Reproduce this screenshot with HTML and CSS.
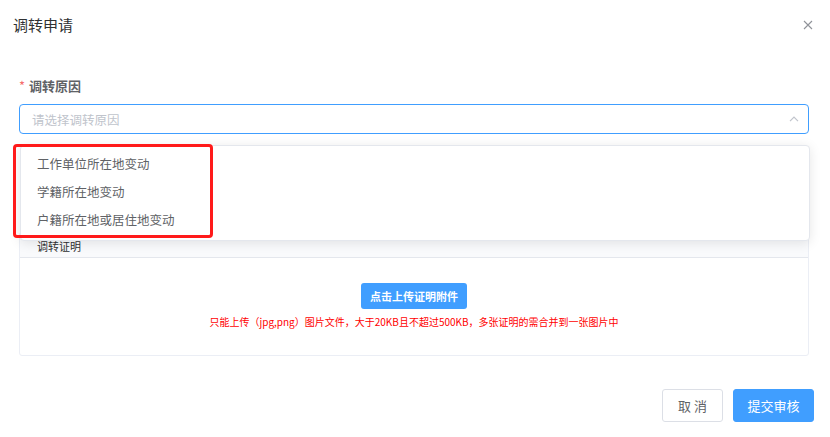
FILE: index.html
```html
<!DOCTYPE html>
<html lang="zh-CN">
<head>
  <meta charset="UTF-8">
  <meta name="viewport" content="width=device-width, initial-scale=1.0">
  <title>调转申请</title>
  <link rel="stylesheet" href="styles.css">
</head>
<body>
  <div class="dialog">
    <div class="dialog-header">
      <span class="dialog-title">调转申请</span>
      <span class="dialog-close">
        <svg width="10" height="10" viewBox="0 0 10 10"><path d="M1 1L9 9M9 1L1 9" stroke="#909399" stroke-width="1.1" fill="none"/></svg>
      </span>
    </div>

    <div class="dialog-body">
      <div class="form-label"><span class="required">*</span>调转原因</div>
      <div class="select">
        <span class="placeholder">请选择调转原因</span>
        <svg class="arrow" width="10" height="6" viewBox="0 0 10 6"><path d="M1 5.2L5 1.2L9 5.2" stroke="#c0c4cc" stroke-width="1.2" fill="none"/></svg>
      </div>

      <div class="proof-table">
        <div class="proof-head">调转证明</div>
        <div class="proof-body">
          <button class="upload-btn">点击上传证明附件</button>
          <p class="upload-tip">只能上传（jpg,png）图片文件，大于20KB且不超过500KB，多张证明的需合并到一张图片中</p>
        </div>
      </div>
    </div>

    <div class="dialog-footer">
      <button class="btn">取 消</button>
      <button class="btn btn-primary">提交审核</button>
    </div>

    <!-- select dropdown (open) -->
    <ul class="dropdown">
      <li>工作单位所在地变动</li>
      <li>学籍所在地变动</li>
      <li>户籍所在地或居住地变动</li>
    </ul>
    <div class="mark"></div>
  </div>
</body>
</html>
```

FILE: styles.css
```css
* {
  margin: 0;
  padding: 0;
  box-sizing: border-box;
}

body {
  background: #fff;
  font-family: "Noto Sans CJK SC", "Noto Sans", sans-serif;
  color: #606266;
}

.dialog {
  position: relative;
  width: 830px;
  height: 437px;
  overflow: hidden;
}

.dialog-header {
  display: flex;
  justify-content: space-between;
  align-items: center;
  padding: 15px 17px 0 13px;
  height: 35px;
}

.dialog-title {
  font-size: 15px;
  line-height: 20px;
  color: #303133;
}

.dialog-close {
  display: flex;
}

.dialog-body {
  padding: 41px 21px 0 19px;
}

.form-label {
  font-size: 13px;
  line-height: 20px;
  font-weight: 600;
  color: #606266;
}

.required {
  color: #f56c6c;
  margin-right: 4px;
  font-weight: 400;
}

.select {
  margin-top: 8px;
  height: 30px;
  border: 1px solid #409eff;
  border-radius: 4px;
  display: flex;
  align-items: center;
  justify-content: space-between;
  padding: 0 9px 0 12px;
}

.placeholder {
  font-size: 12.5px;
  color: #c0c4cc;
}

.proof-table {
  margin-top: 98px;
  border: 1px solid #ebeef5;
  border-radius: 3px;
  height: 124px;
}

.proof-head {
  height: 25px;
  line-height: 26px;
  background: #f9fafc;
  border-bottom: 1px solid #e4e7ed;
  font-size: 11px;
  color: #303133;
  padding-left: 17px;
}

.proof-body {
  display: flex;
  flex-direction: column;
  align-items: center;
  padding-top: 25px;
}

.upload-btn {
  width: 106px;
  height: 26px;
  border: none;
  border-radius: 3px;
  background: #409eff;
  color: #fff;
  font-family: inherit;
  font-size: 11px;
  font-weight: 600;
}

.upload-tip {
  margin-top: 6px;
  font-size: 10px;
  line-height: 14px;
  color: #ff0000;
}

.dialog-footer {
  display: flex;
  justify-content: flex-end;
  gap: 10px;
  padding: 33px 16px 0 0;
}

.btn {
  height: 33px;
  width: 61px;
  border: 1px solid #dcdfe6;
  border-radius: 3px;
  background: #fff;
  color: #606266;
  font-family: inherit;
  font-size: 13px;
}

.btn-primary {
  width: 81px;
  border-color: #409eff;
  background: #409eff;
  color: #fff;
}

.dropdown {
  position: absolute;
  left: 20px;
  top: 145px;
  width: 790px;
  height: 96px;
  list-style: none;
  background: #fff;
  border: 1px solid #e4e7ed;
  border-radius: 4px;
  box-shadow: 0 2px 12px rgba(0, 0, 0, 0.1);
  padding-top: 4px;
}

.dropdown li {
  height: 28px;
  line-height: 28px;
  padding-left: 16px;
  font-size: 12.5px;
  color: #606266;
}

.mark {
  position: absolute;
  left: 13px;
  top: 144px;
  width: 200px;
  height: 94px;
  border: 3px solid #ff1a1a;
  border-radius: 4px;
}
```
